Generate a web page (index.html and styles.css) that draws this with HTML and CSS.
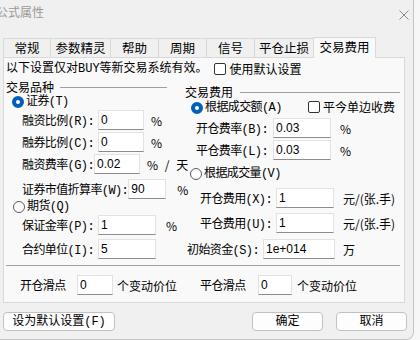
FILE: index.html
```html
<!DOCTYPE html>
<html lang="zh-CN">
<head>
    <meta charset="UTF-8" />
    <meta name="viewport" content="width=device-width, initial-scale=1.0" />
    <title>公式属性</title>
    <link rel="stylesheet" href="styles.css">
</head>
<body>
    <div class="window">
        <div class="titlebar">
            <span class="title">公式属性</span>
            <svg class="close" width="10" height="10" viewBox="0 0 10 10">
                <path d="M0.5 0.5 L9.5 9.5 M9.5 0.5 L0.5 9.5" stroke="#8a8a8a" stroke-width="1" fill="none"/>
            </svg>
        </div>

        <div class="tabs">
            <div class="tab w47">常规</div>
            <div class="tab w61">参数精灵</div>
            <div class="tab w49">帮助</div>
            <div class="tab w49">周期</div>
            <div class="tab w49">信号</div>
            <div class="tab w60">平仓止损</div>
            <div class="tab active">交易费用</div>
        </div>

        <div class="panel">
            <div class="notice">
                <span class="mono">以下设置仅对BUY等新交易系统有效。</span>
                <span class="check"></span>
                <span>使用默认设置</span>
            </div>

            <div class="cols">
                <div class="col-left">
                    <div class="group-head">
                        <span>交易品种</span>
                        <span class="line short"></span>
                    </div>
                    <div class="radio-row">
                        <span class="radio on"></span>
                        <span class="mono tight">证券(T)</span>
                    </div>
                    <div class="field indent16">
                        <span class="lbl w76">融资比例(R):</span>
                        <input class="box w46" type="text" value="0">
                        <span class="unit m7">%</span>
                    </div>
                    <div class="field indent16 mt2">
                        <span class="lbl w76">融券比例(C):</span>
                        <input class="box w46" type="text" value="0">
                        <span class="unit m7">%</span>
                    </div>
                    <div class="field indent16 mt2">
                        <span class="lbl w76">融资费率(G):</span>
                        <input class="box w46" type="text" value="0.02">
                        <span class="unit m7 spaced">% / 天</span>
                    </div>
                    <div class="field indent16 mt5">
                        <span class="lbl w111">证券市值折算率(W):</span>
                        <input class="box w38" type="text" value="90">
                        <span class="unit m11">%</span>
                    </div>
                    <div class="radio-row pl7">
                        <span class="radio"></span>
                        <span class="mono tight">期货(Q)</span>
                    </div>
                    <div class="field indent16">
                        <span class="lbl w76">保证金率(P):</span>
                        <input class="box w58" type="text" value="1">
                        <span class="unit m10">%</span>
                    </div>
                    <div class="field indent16 mt4">
                        <span class="lbl w76">合约单位(I):</span>
                        <input class="box w58" type="text" value="5">
                    </div>
                </div>

                <div class="col-right">
                    <div class="group-head right-head">
                        <span>交易费用</span>
                        <span class="line grow"></span>
                    </div>
                    <div class="radio-row">
                        <span class="radio on"></span>
                        <span class="mono tight">根据成交额(A)</span>
                        <span class="check-group">
                            <span class="check"></span>
                            <span>平今单边收费</span>
                        </span>
                    </div>
                    <div class="field indent11 mt2">
                        <span class="lbl w77">开仓费率(B):</span>
                        <input class="box w58" type="text" value="0.03">
                        <span class="unit m9">%</span>
                    </div>
                    <div class="field indent11 mt2">
                        <span class="lbl w77">平仓费率(L):</span>
                        <input class="box w58" type="text" value="0.03">
                        <span class="unit m9">%</span>
                    </div>
                    <div class="radio-row pl5 mt6">
                        <span class="radio"></span>
                        <span class="mono tight">根据成交量(V)</span>
                    </div>
                    <div class="field indent15 mt6">
                        <span class="lbl w76">开仓费用(X):</span>
                        <input class="box w58" type="text" value="1">
                        <span class="unit m9">元/(张.手)</span>
                    </div>
                    <div class="field indent15 mt5">
                        <span class="lbl w76">平仓费用(U):</span>
                        <input class="box w58" type="text" value="1">
                        <span class="unit m9">元/(张.手)</span>
                    </div>
                    <div class="field indent2 mt6">
                        <span class="lbl w76">初始资金(S):</span>
                        <input class="box w72" type="text" value="1e+014">
                        <span class="unit m8">万</span>
                    </div>
                </div>
            </div>

            <div class="sep"></div>

            <div class="field slip">
                <span class="lbl w57">开仓滑点</span>
                <input class="box w36" type="text" value="0">
                <span class="unit m4">个变动价位</span>
                <span class="lbl w58 gap23">平仓滑点</span>
                <input class="box w34" type="text" value="0">
                <span class="unit m5">个变动价位</span>
            </div>
        </div>

        <div class="buttons">
            <button type="button" class="btn wide">设为默认设置(F)</button>
            <div class="spacer"></div>
            <button type="button" class="btn">确定</button>
            <button type="button" class="btn">取消</button>
        </div>
    </div>
</body>
</html>
```

FILE: styles.css
```css
body{
    margin: 0;
    background-color: #f7f7f7;
    font-family: "Noto Sans CJK SC", "Noto Sans", sans-serif;
    font-size: 12px;
    color: #000;
}
.window{
    width: 413px;
    height: 339px;
    background-color: #f0f0f0;
    border-right: 1px solid #c4c4c4;
    border-bottom: 1px solid #c4c4c4;
    border-bottom-right-radius: 8px;
    overflow: hidden;
}
.titlebar{
    height: 37px;
    display: flex;
    justify-content: space-between;
    align-items: flex-start;
}
.title{
    margin-left: -4px;
    padding-top: 4px;
    line-height: 16px;
    color: #9a9a9a;
}
.close{
    margin-top: 10px;
    margin-right: 4px;
}

/* tabs */
.tabs{
    display: flex;
    align-items: flex-end;
    height: 20px;
    padding-left: 3px;
}
.tab{
    height: 19px;
    box-sizing: border-box;
    border: 1px solid #d9d9d9;
    border-bottom: none;
    margin-right: -1px;
    background-color: #f0f0f0;
    display: flex;
    align-items: center;
    justify-content: center;
    font-size: 12.5px;
    line-height: 16px;
}
.w47{ width: 48px; }
.w61{ width: 61px; }
.w49{ width: 49px; }
.w60{ width: 60px; }
.tab.active{
    width: 63px;
    height: 21px;
    margin-bottom: -1px;
    background-color: #f9f9f9;
    position: relative;
    z-index: 1;
    padding-bottom: 2px;
}

/* panel */
.panel{
    margin-left: 3px;
    width: 402px;
    height: 246px;
    box-sizing: border-box;
    border: 1px solid #d9d9d9;
    background-color: #f9f9f9;
    padding: 3px 0 0 2px;
}
.mono,
.lbl{
    font-family: "Liberation Mono", "Noto Sans CJK SC", monospace;
}
.tight,
.lbl{
    letter-spacing: -0.6px;
}
.notice{
    display: flex;
    align-items: center;
    height: 16px;
    line-height: 16px;
}
.notice .check{
    margin-left: 6px;
    margin-right: 4px;
}
.cols{
    display: flex;
}
.col-left{
    width: 179px;
}
.col-right{
    flex: 1;
    padding-right: 4px;
}
.group-head{
    display: flex;
    align-items: center;
    height: 14px;
    margin-top: 3px;
    line-height: 14px;
}
.right-head{
    margin-top: 7px;
    height: 16px;
}
.line{
    height: 1px;
    background-color: #a0a0a0;
    margin-left: 6px;
}
.line.short{ width: 107px; }
.line.grow{ flex: 1; margin-left: 7px; }

.radio-row{
    display: flex;
    align-items: center;
    height: 16px;
    padding-left: 6px;
    line-height: 16px;
}
.radio{
    width: 12px;
    height: 12px;
    box-sizing: border-box;
    border: 1px solid #5a5a5a;
    border-radius: 50%;
    background-color: #fff;
    margin-right: 2px;
}
.radio.on{
    border: 4px solid #005fb8;
    background-color: #fff;
}
.check{
    width: 12px;
    height: 12px;
    box-sizing: border-box;
    border: 1px solid #333;
    border-radius: 2px;
    background-color: #fff;
    display: inline-block;
}
.check-group{
    margin-left: auto;
    margin-right: 5px;
    display: flex;
    align-items: center;
    align-self: flex-start;
    line-height: 14px;
}
.check-group .check{
    margin-right: 3px;
}

.field{
    display: flex;
    align-items: center;
    height: 20px;
}
.lbl{
    white-space: nowrap;
}
.box{
    height: 20px;
    box-sizing: border-box;
    border: 1px solid #e2e2e2;
    border-bottom-color: #8c8c8c;
    background-color: #fff;
    padding: 0 2px;
    margin: 0;
    font-family: "Liberation Sans", sans-serif;
    font-size: 12px;
    color: #000;
    outline: none;
}
.unit{
    white-space: nowrap;
}
.spaced{
    word-spacing: 4px;
}

.w34{ width: 34px; }
.w36{ width: 36px; }
.w38{ width: 38px; }
.w46{ width: 46px; }
.w57{ width: 57px; }
.w58{ width: 58px; }
.w72{ width: 72px; }
.w76{ width: 76px; }
.w77{ width: 77px; }
.w111{ width: 111px; }

.indent2{ padding-left: 2px; }
.indent11{ padding-left: 11px; }
.indent15{ padding-left: 15px; }
.indent16{ padding-left: 16px; }
.pl5{ padding-left: 5px; }
.pl7{ padding-left: 7px; }

.mt2{ margin-top: 2px; }
.mt4{ margin-top: 4px; }
.mt5{ margin-top: 5px; }
.mt6{ margin-top: 6px; }

.m4{ margin-left: 4px; }
.m5{ margin-left: 5px; }
.m7{ margin-left: 7px; }
.m8{ margin-left: 8px; }
.m9{ margin-left: 9px; }
.m10{ margin-left: 10px; }
.m11{ margin-left: 11px; }
.gap23{ margin-left: 23px; }

.sep{
    width: 394px;
    height: 1px;
    background-color: #a0a0a0;
    margin-top: 6px;
}
.slip{
    margin-top: 9px;
    padding-left: 14px;
}

/* buttons */
.buttons{
    display: flex;
    margin-top: 9px;
    padding-left: 3px;
}
.btn{
    width: 71px;
    height: 19px;
    box-sizing: border-box;
    border: 1px solid #c2c2c2;
    border-radius: 4px;
    background-color: #fdfdfd;
    font-family: "Liberation Mono", "Noto Sans CJK SC", monospace;
    font-size: 12px;
    line-height: 16px;
    padding: 0;
    color: #000;
}
.btn.wide{
    width: 112px;
}
.spacer{
    flex: 1;
}
.btn + .btn{
    margin-left: 13px;
}
.buttons .btn:last-child{
    margin-right: 6px;
}
```
